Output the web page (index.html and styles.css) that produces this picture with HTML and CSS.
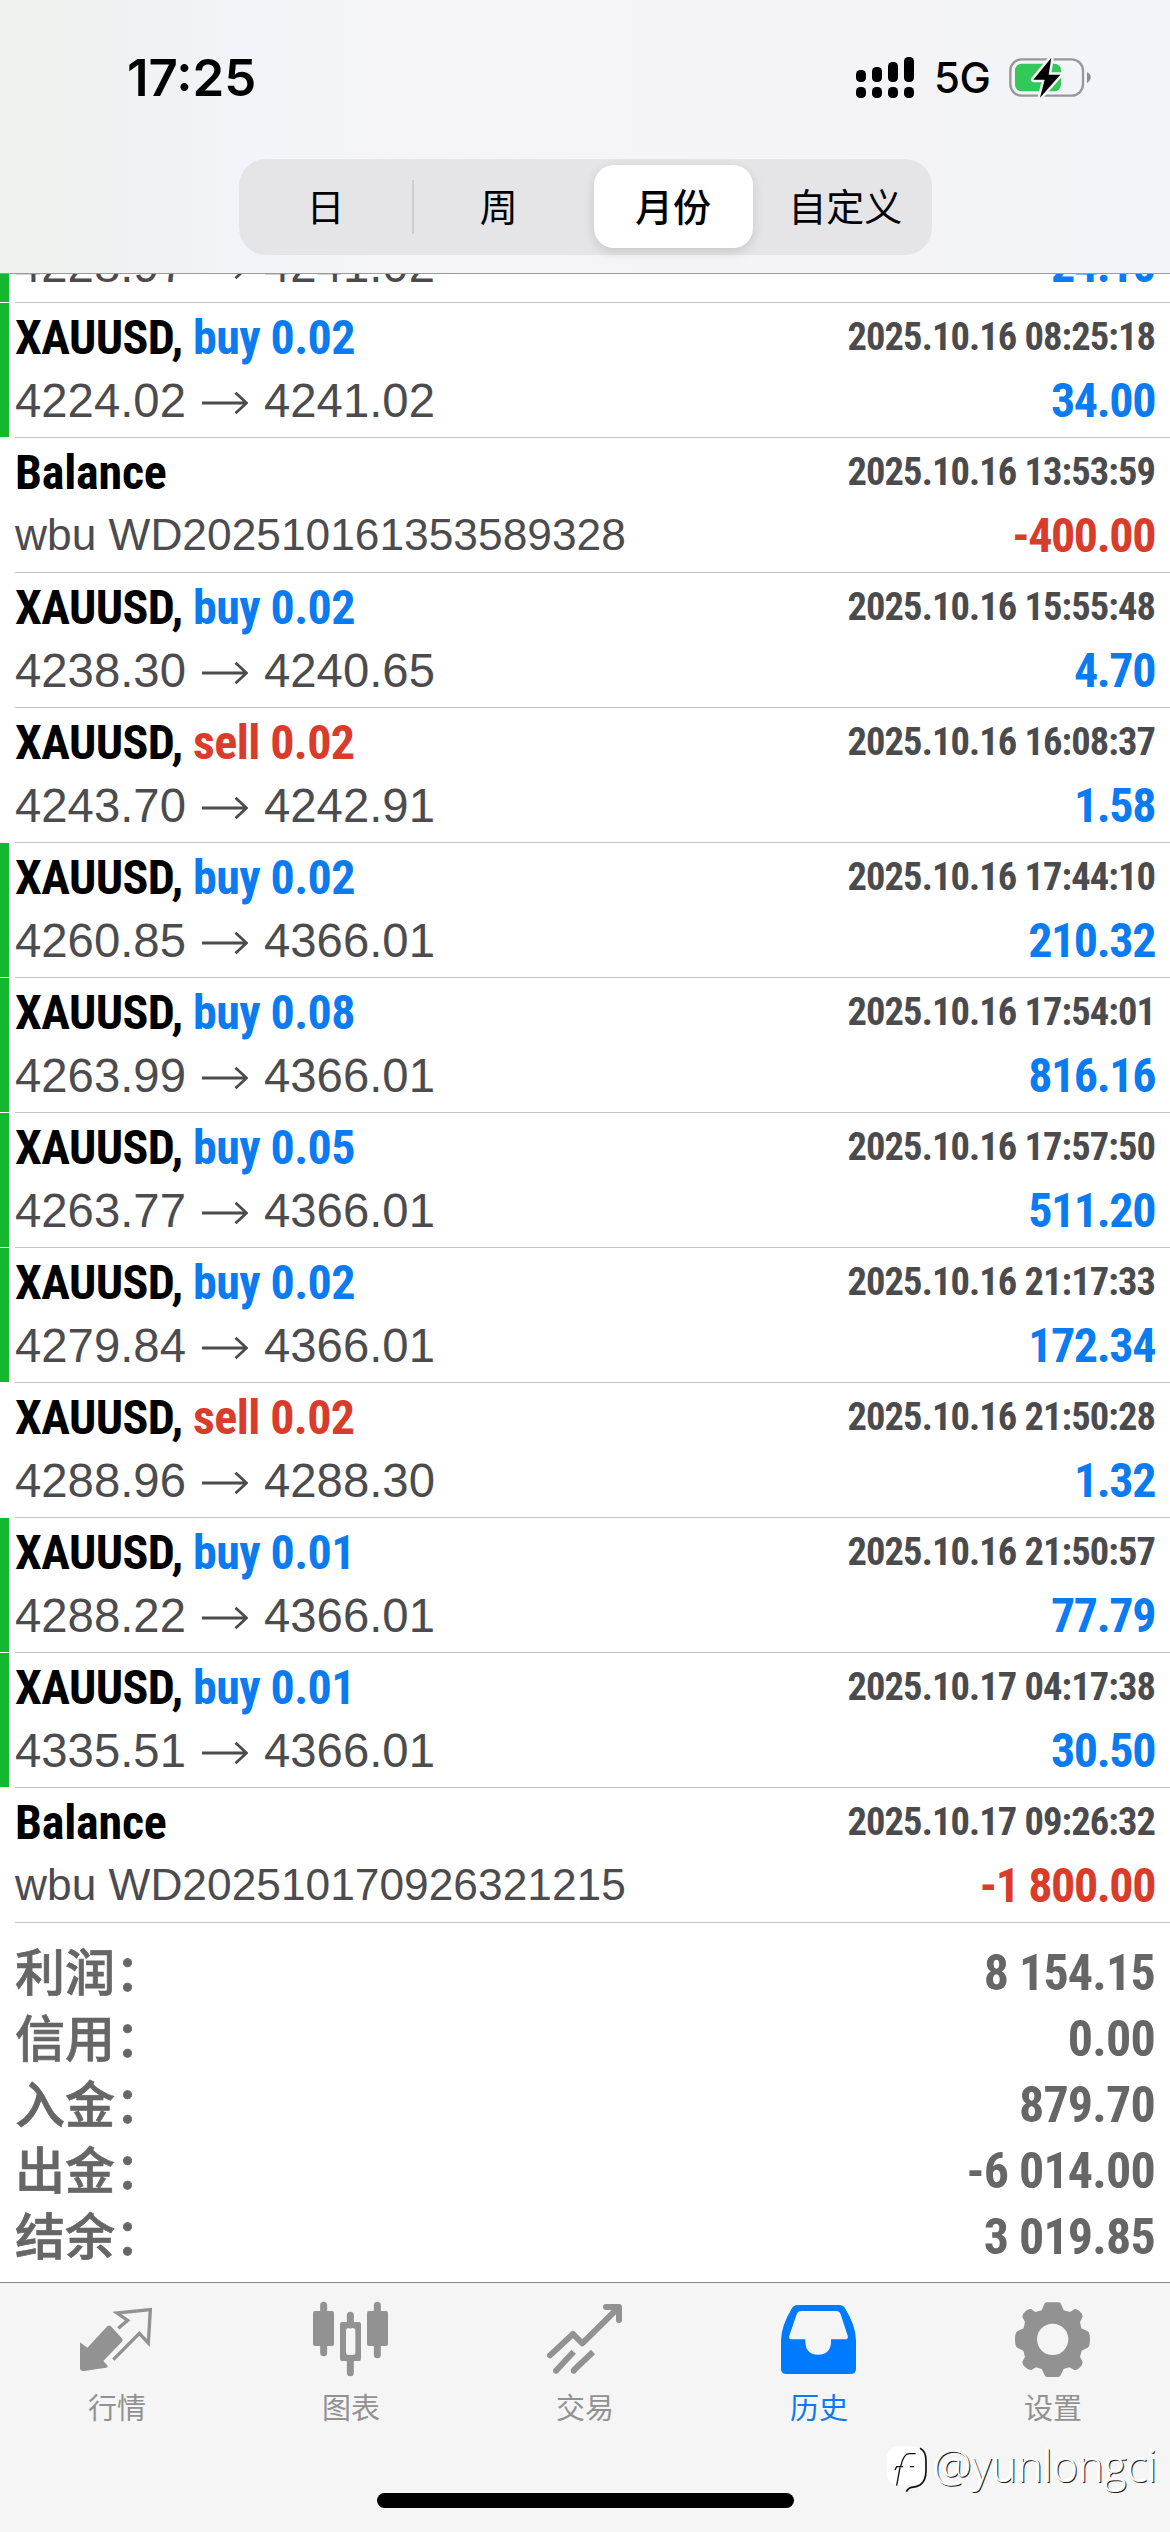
FILE: index.html
```html
<!DOCTYPE html>
<html lang="zh-CN">
<head>
<meta charset="utf-8">
<title>历史</title>
<link rel="stylesheet" href="styles.css">
</head>
<body>
<svg class="defs" width="0" height="0">
  <symbol id="arrow" viewBox="0 0 46 24"><path d="M0 12H44M33.500 1.800L44.500 12L33.500 22.200" fill="none" stroke="currentColor" stroke-width="2.800"/></symbol>
</svg>
<div class="screen">
  <header class="top">
    <div class="status">
      <span class="time">17:25</span>
      <div class="status-right">
        <svg class="signal" viewBox="108 48 174 129">
          <rect x="108" y="90" width="30" height="36" rx="13"/><rect x="156" y="81" width="30" height="45" rx="13"/><rect x="204" y="66" width="30" height="60" rx="13"/><rect x="252" y="51" width="30" height="75" rx="13"/>
          <rect x="108" y="141" width="30" height="33" rx="13"/><rect x="156" y="141" width="30" height="33" rx="13"/><rect x="204" y="141" width="30" height="33" rx="13"/><rect x="252" y="141" width="30" height="33" rx="13"/>
        </svg>
        <span class="net">5G</span>
        <svg class="battery" viewBox="564 48 252 129">
          <rect x="571" y="58" width="218" height="109" rx="34" fill="none" stroke="#98989b" stroke-width="7"/>
          <rect x="585" y="71" width="138" height="83" rx="20" fill="#34c759"/>
          <path d="M801 96Q812 101 812 112T801 129Z" fill="#8e8e92"/>
          <path d="M694 53L640 119H674L660 173L721 104H686Z" fill="#000" stroke="#f4f4f6" stroke-width="15" stroke-linejoin="round" paint-order="stroke"/>
        </svg>
      </div>
    </div>
    <nav class="segments">
      <span class="seg">日</span><span class="seg divided">周</span><span class="seg active">月份</span><span class="seg">自定义</span>
    </nav>
  </header>
  <main class="list">
    <section class="row partial win"><i class="bar"></i><div class="cell">
      <div class="line"><span class="price">4228.97<svg class="arrow"><use href="#arrow"/></svg>4241.02</span><b class="amount up">24.10</b></div></div></section>
    <section class="row win"><i class="bar"></i><div class="cell">
      <div class="line"><b class="name">XAUUSD, <span class="up">buy 0.02</span></b><b class="date">2025.10.16 08:25:18</b></div>
      <div class="line"><span class="price">4224.02<svg class="arrow"><use href="#arrow"/></svg>4241.02</span><b class="amount up">34.00</b></div></div></section>
    <section class="row"><i class="bar"></i><div class="cell">
      <div class="line"><b class="name balance">Balance</b><b class="date">2025.10.16 13:53:59</b></div>
      <div class="line"><span class="note">wbu WD202510161353589328</span><b class="amount down">-400.00</b></div></div></section>
    <section class="row"><i class="bar"></i><div class="cell">
      <div class="line"><b class="name">XAUUSD, <span class="up">buy 0.02</span></b><b class="date">2025.10.16 15:55:48</b></div>
      <div class="line"><span class="price">4238.30<svg class="arrow"><use href="#arrow"/></svg>4240.65</span><b class="amount up">4.70</b></div></div></section>
    <section class="row"><i class="bar"></i><div class="cell">
      <div class="line"><b class="name">XAUUSD, <span class="down">sell 0.02</span></b><b class="date">2025.10.16 16:08:37</b></div>
      <div class="line"><span class="price">4243.70<svg class="arrow"><use href="#arrow"/></svg>4242.91</span><b class="amount up">1.58</b></div></div></section>
    <section class="row win"><i class="bar"></i><div class="cell">
      <div class="line"><b class="name">XAUUSD, <span class="up">buy 0.02</span></b><b class="date">2025.10.16 17:44:10</b></div>
      <div class="line"><span class="price">4260.85<svg class="arrow"><use href="#arrow"/></svg>4366.01</span><b class="amount up">210.32</b></div></div></section>
    <section class="row win"><i class="bar"></i><div class="cell">
      <div class="line"><b class="name">XAUUSD, <span class="up">buy 0.08</span></b><b class="date">2025.10.16 17:54:01</b></div>
      <div class="line"><span class="price">4263.99<svg class="arrow"><use href="#arrow"/></svg>4366.01</span><b class="amount up">816.16</b></div></div></section>
    <section class="row win"><i class="bar"></i><div class="cell">
      <div class="line"><b class="name">XAUUSD, <span class="up">buy 0.05</span></b><b class="date">2025.10.16 17:57:50</b></div>
      <div class="line"><span class="price">4263.77<svg class="arrow"><use href="#arrow"/></svg>4366.01</span><b class="amount up">511.20</b></div></div></section>
    <section class="row win"><i class="bar"></i><div class="cell">
      <div class="line"><b class="name">XAUUSD, <span class="up">buy 0.02</span></b><b class="date">2025.10.16 21:17:33</b></div>
      <div class="line"><span class="price">4279.84<svg class="arrow"><use href="#arrow"/></svg>4366.01</span><b class="amount up">172.34</b></div></div></section>
    <section class="row"><i class="bar"></i><div class="cell">
      <div class="line"><b class="name">XAUUSD, <span class="down">sell 0.02</span></b><b class="date">2025.10.16 21:50:28</b></div>
      <div class="line"><span class="price">4288.96<svg class="arrow"><use href="#arrow"/></svg>4288.30</span><b class="amount up">1.32</b></div></div></section>
    <section class="row win"><i class="bar"></i><div class="cell">
      <div class="line"><b class="name">XAUUSD, <span class="up">buy 0.01</span></b><b class="date">2025.10.16 21:50:57</b></div>
      <div class="line"><span class="price">4288.22<svg class="arrow"><use href="#arrow"/></svg>4366.01</span><b class="amount up">77.79</b></div></div></section>
    <section class="row win"><i class="bar"></i><div class="cell">
      <div class="line"><b class="name">XAUUSD, <span class="up">buy 0.01</span></b><b class="date">2025.10.17 04:17:38</b></div>
      <div class="line"><span class="price">4335.51<svg class="arrow"><use href="#arrow"/></svg>4366.01</span><b class="amount up">30.50</b></div></div></section>
    <section class="row"><i class="bar"></i><div class="cell">
      <div class="line"><b class="name balance">Balance</b><b class="date">2025.10.17 09:26:32</b></div>
      <div class="line"><span class="note">wbu WD202510170926321215</span><b class="amount down">-1 800.00</b></div></div></section>
    <section class="summary">
      <div class="sum"><span class="label">利润：</span><b>8 154.15</b></div>
      <div class="sum"><span class="label">信用：</span><b>0.00</b></div>
      <div class="sum"><span class="label">入金：</span><b>879.70</b></div>
      <div class="sum"><span class="label">出金：</span><b>-6 014.00</b></div>
      <div class="sum"><span class="label">结余：</span><b>3 019.85</b></div>
    </section>
  </main>
  <footer class="bottom">
    <nav class="tabs">
      <div class="tab"><svg viewBox="51 30 240 240">
        <path d="M175 115L203 91L171 69L271 59L265 159L238 130L160 209" fill="none" stroke="currentColor" stroke-width="10"/>
        <path d="M142 109Q148 104 154 110L185 144Q191 150 185 156L130 213L142 226Q146 232 138 233L72 243Q60 244 60 234V157L82 173Z"/></svg><span>行情</span></div>
      <div class="tab"><svg viewBox="753 30 240 240">
        <g stroke="currentColor" stroke-width="21" stroke-linecap="round"><path d="M791 46V188M952 46V194M871 76V105M871 205V248"/></g>
        <rect x="759" y="63" width="63" height="105" rx="6"/><rect x="921" y="63" width="63" height="105" rx="6"/>
        <path fill-rule="evenodd" d="M846 96H897Q903 96 903 102V207Q903 213 897 213H846Q840 213 840 207V102Q840 96 846 96ZM866 114Q858 114 858 122V187Q858 195 866 195H878Q886 195 886 187V122Q886 114 878 114Z"/></svg><span>图表</span></div>
      <div class="tab"><svg viewBox="45 30 240 240">
        <g fill="none" stroke="currentColor" stroke-width="18" stroke-linejoin="round"><path d="M60 196L129 132L157 160L264 54" stroke-linecap="round"/><path d="M228 51H267V90" stroke-linecap="round"/><path d="M131 185L80 240M189 186L132 240"/></g><circle cx="78" cy="242" r="9"/><circle cx="131" cy="242" r="9"/></svg><span>交易</span></div>
      <div class="tab current"><svg viewBox="747 30 240 240">
        <path fill-rule="evenodd" d="M803 45H928Q940 45 946 56Q978 108 978 152V236Q978 252 962 252H769Q753 252 753 236V152Q753 108 785 56Q791 45 803 45ZM814 63Q804 63 800 73L778 137Q775 148 786 148H826V158Q829 194 864 194Q900 194 903 158V148H945Q956 148 953 137L932 73Q928 63 918 63Z"/></svg><span>历史</span></div>
      <div class="tab"><svg viewBox="429 30 240 240">
        <path fill-rule="evenodd" d="M529 37H567Q571 37 573 42L581 61L600 66L614 57Q620 56 628 63Q638 71 638 80L630 96L634 115L653 124Q660 128 660 148Q660 170 653 173L635 182L630 200L638 216Q638 226 629 233Q621 241 613 240L598 232L581 237L572 256Q570 261 565 261H530Q526 261 524 256L515 237L498 232L484 240Q475 241 466 232Q457 224 457 216L465 200L460 182L442 173Q435 170 435 148Q435 128 442 124L461 115L465 96L457 80Q457 72 467 63Q475 56 483 57L496 66L515 61L523 42Q525 37 529 37ZM548 101A47 47 0 1 0 548 195A47 47 0 1 0 548 101Z"/></svg><span>设置</span></div>
    </nav>
    <div class="home"></div>
    <div class="mark">
      <svg viewBox="45 465 135 150"><rect x="50" y="472" width="112" height="116" rx="34" fill="#fff"/>
        <path d="M80 590L90 535M75 543L80 533H99M92 532Q101 493 118 494H137M120 533H132" fill="none" stroke="#111" stroke-width="4"/>
        <path d="M150 478Q168 486 168 515V545Q168 575 150 588Q140 594 124 595Q116 596 109 608" fill="none" stroke="#111" stroke-width="5"/></svg>
      <span>@yunlongci</span>
    </div>
  </footer>
</div>
</body>
</html>
```
FILE: styles.css
```css
* { box-sizing: border-box; }
body { margin: 0; background: #fff; }
.defs { position: absolute; }
.screen { width: 1170px; height: 2532px; display: flex; flex-direction: column; overflow: hidden; font-family: "Roboto", "Noto Sans CJK SC", sans-serif; }

.top { height: 274px; flex: none; border-bottom: 1px solid #9b9b9d; background: linear-gradient(90deg, #eff1ee 0, #f0f1f1 110px, #f3f4f9 250px, #f5f5f7 420px, #f4f4f6 900px, #f3f4fa 1170px); }
.status { height: 159px; padding: 0 78px 0 127px; display: flex; justify-content: space-between; align-items: flex-start; }
.time { margin-top: 48px; font: 600 51px/60px "Inter", sans-serif; letter-spacing: 0; }
.status-right { display: flex; align-items: center; margin-top: 56px; height: 43px; }
.signal { width: 58px; height: 43px; }
.net { margin-left: 20px; font: 500 42px/45px "Inter", sans-serif; letter-spacing: -0.5px; width: 56px; }
.battery { width: 84px; height: 43px; margin-left: 18px; }
.segments { width: 693px; height: 96px; margin: 0 auto 0 239px; display: grid; grid-template-columns: repeat(4, 1fr); padding: 6px 0 7px; border-radius: 27px; background: #e5e5e8; }
.seg { display: flex; align-items: center; justify-content: center; padding-bottom: 3px; font: 400 38px/60px "Noto Sans CJK SC", sans-serif; }
.seg.divided { background: linear-gradient(#cdcdd0, #cdcdd0) 0 50% / 2px 54px no-repeat; }
.seg.active { margin: 0 6px 0 8px; background: #fff; border-radius: 20px; font-weight: 500; box-shadow: 0 4px 12px rgba(0, 0, 0, .13); }

.list { flex: 1; min-height: 0; }
.row { height: 135px; display: flex; }
.bar { width: 9px; margin: 1px 6px 0 0; flex: none; }
.win .bar { background: #12b92f; }
.cell { flex: 1; padding: 5px 16px 0 0; border-top: 1px solid #c3c3c5; display: flex; flex-direction: column; gap: 3px; }
.partial { height: 28px; overflow: hidden; }
.partial .bar { margin-top: 0; }
.partial .cell { border: 0; padding-top: 0; margin-top: -38px; }
.line { height: 60px; display: flex; justify-content: space-between; line-height: 60px; white-space: nowrap; flex: none; }
.name, .date, .amount, .sum b { font-family: "Roboto Condensed", "Roboto", sans-serif; font-stretch: 75%; font-weight: 700; }
.name { font-size: 48px; letter-spacing: -0.6px; color: #000; }
.name.balance { letter-spacing: -0.2px; }
.date { font-size: 38.5px; margin: -1px -1px 0 0; color: #4b4b4e; letter-spacing: -0.9px; }
.amount { font-size: 48px; letter-spacing: -1.4px; margin-right: -1px; }
.price { font: 47.3px/60px "Liberation Sans", sans-serif; color: #4c4c4f; display: flex; align-items: center; }
.note { font: 44.3px/58px "Liberation Sans", sans-serif; color: #4c4c4f; }
.arrow { width: 46px; height: 24px; margin: 3px 16px 0; }
.up { color: #0a7bf0; }
.down { color: #da3c2c; }

.summary { border-top: 1px solid #c3c3c5; margin-left: 15px; padding: 17px 16px 0 0; color: #666; }
.sum { height: 66px; display: flex; justify-content: space-between; line-height: 66px; font-size: 50px; }
.sum b { letter-spacing: -0.8px; margin-right: -1px; }
.label { font-family: "Noto Sans CJK SC", sans-serif; font-weight: 500; line-height: 58px; -webkit-text-stroke: 0.7px #666; }

.bottom { position: relative; height: 250px; flex: none; border-top: 1px solid #88888a; background: #f5f5f5; }
.tabs { display: grid; grid-template-columns: repeat(5, 1fr); padding-top: 17px; }
.tab { display: flex; flex-direction: column; align-items: center; color: #929292; fill: currentColor; font: 29px/40px "Noto Sans CJK SC", sans-serif; }
.tab svg { width: 80px; height: 80px; }
.tab span { margin-top: 6px; }
.tab.current { color: #0a7aef; }
.tab.current svg { color: #007aff; }
.home { width: 417px; height: 15px; border-radius: 8px; background: #000; margin: 67px 0 0 377px; }
.mark { position: absolute; left: 885px; top: 161px; display: flex; align-items: center; }
.mark svg { width: 45px; height: 50px; }
.mark span { margin: -6px 0 0 3px; font: 300 43.5px/50px "Open Sans", sans-serif; color: #fafafa; text-shadow: 1px 1px 0 #1a1a1a, -1px -1px 1px #fff; }
```
